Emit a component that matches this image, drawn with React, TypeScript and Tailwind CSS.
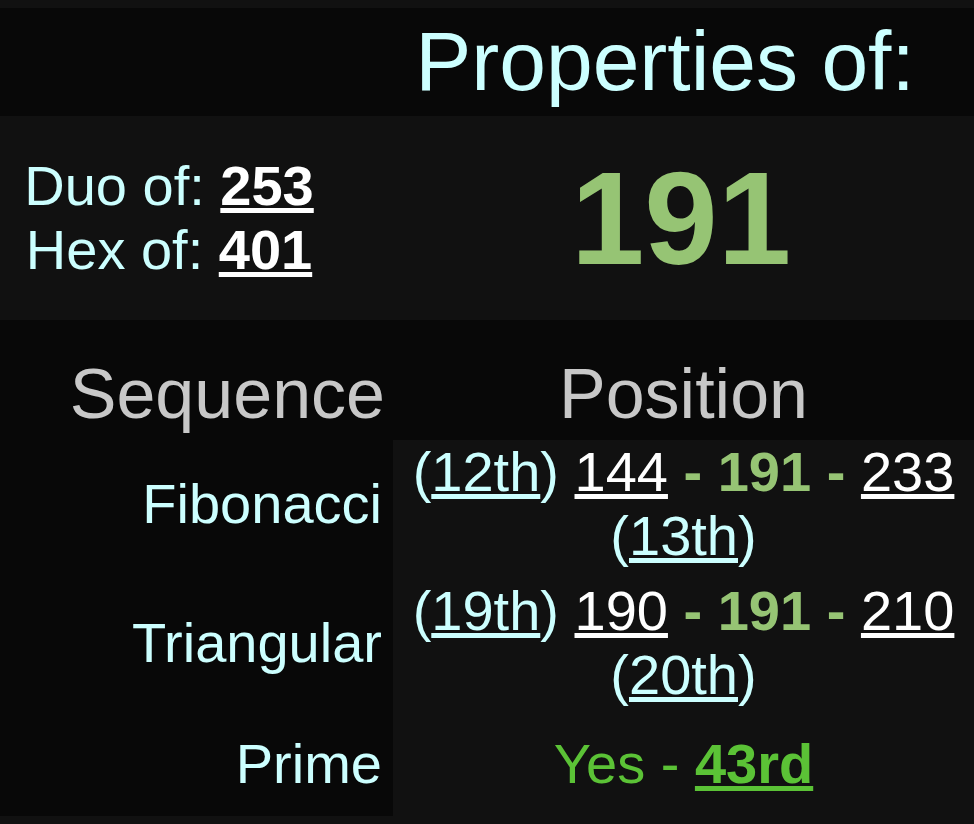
import React from "react";

const font = "font-['Liberation_Sans',Arial,sans-serif]";

type Seq = {
    name: string;
    prevIdx: string;
    prev: number;
    next: number;
    nextIdx: string;
    pad: string;
};

const SEQUENCES: Seq[] = [
    { name: "Fibonacci", prevIdx: "12th", prev: 144, next: 233, nextIdx: "13th", pad: "pb-[11px]" },
    { name: "Triangular", prevIdx: "19th", prev: 190, next: 210, nextIdx: "20th", pad: "pb-[21px]" },
];

const App = () => {
    const n = 191;

    return (
        <div className={`min-h-[824px] w-full bg-[#111111] py-2 ${font}`}>
            {/* title row */}
            <div className="flex h-[108px] bg-[#080808]">
                <div className="w-[356px] shrink-0" />
                <div className="flex-1 pt-[6px] text-center text-[84px] leading-[94px] text-[#ccffff]">
                    Properties of:
                </div>
            </div>

            {/* number row */}
            <div className="flex h-[204px] items-center bg-[#111111]">
                <div className="flex-1 pr-[50px] text-center text-[56px] leading-[64px] text-[#ccffff]">
                    <div>
                        Duo of: <a className="font-bold text-white underline">253</a>
                    </div>
                    <div>
                        Hex of: <a className="font-bold text-white underline">401</a>
                    </div>
                </div>
                <div className="w-[586px] shrink-0 pt-[2px] text-center text-[132px] font-bold leading-[132px] text-[#96c474]">
                    {n}
                </div>
            </div>

            {/* header */}
            <div className="flex h-[120px] items-end bg-[#080808] pb-[7px] text-[70px] leading-[78px] text-[#c8c8c8]">
                <div className="w-[393px] shrink-0 pr-[8px] text-right">Sequence</div>
                <div className="flex-1 text-center">Position</div>
            </div>

            {/* sequences */}
            <div className="text-[56px] leading-[64px]">
                {SEQUENCES.map((s) => (
                    <div key={s.name} className="flex items-stretch">
                        <div className={`flex w-[393px] shrink-0 items-center justify-end bg-[#080808] pr-[11px] text-[#ccffff] ${s.pad}`}>
                            {s.name}
                        </div>
                        <div className={`flex-1 bg-[#111111] text-center ${s.pad}`}>
                            <span className="text-[#ccffff]">
                                (<a className="underline">{s.prevIdx}</a>)
                            </span>{" "}
                            <a className="text-white underline">{s.prev}</a>{" "}
                            <span className="font-bold text-[#96c474]">- {n} -</span>{" "}
                            <a className="text-white underline">{s.next}</a>{" "}
                            <span className="text-[#ccffff]">
                                (<a className="underline">{s.nextIdx}</a>)
                            </span>
                        </div>
                    </div>
                ))}
                <div className="flex items-stretch">
                    <div className="flex w-[393px] shrink-0 items-center justify-end bg-[#080808] pb-[20px] pr-[11px] pt-[4px] text-[#ccffff]">
                        Prime
                    </div>
                    <div className="flex-1 bg-[#111111] pb-[20px] pt-[4px] text-center text-[#5bc236]">
                        Yes - <a className="font-bold underline">43rd</a>
                    </div>
                </div>
            </div>
        </div>
    );
};

export default App;
